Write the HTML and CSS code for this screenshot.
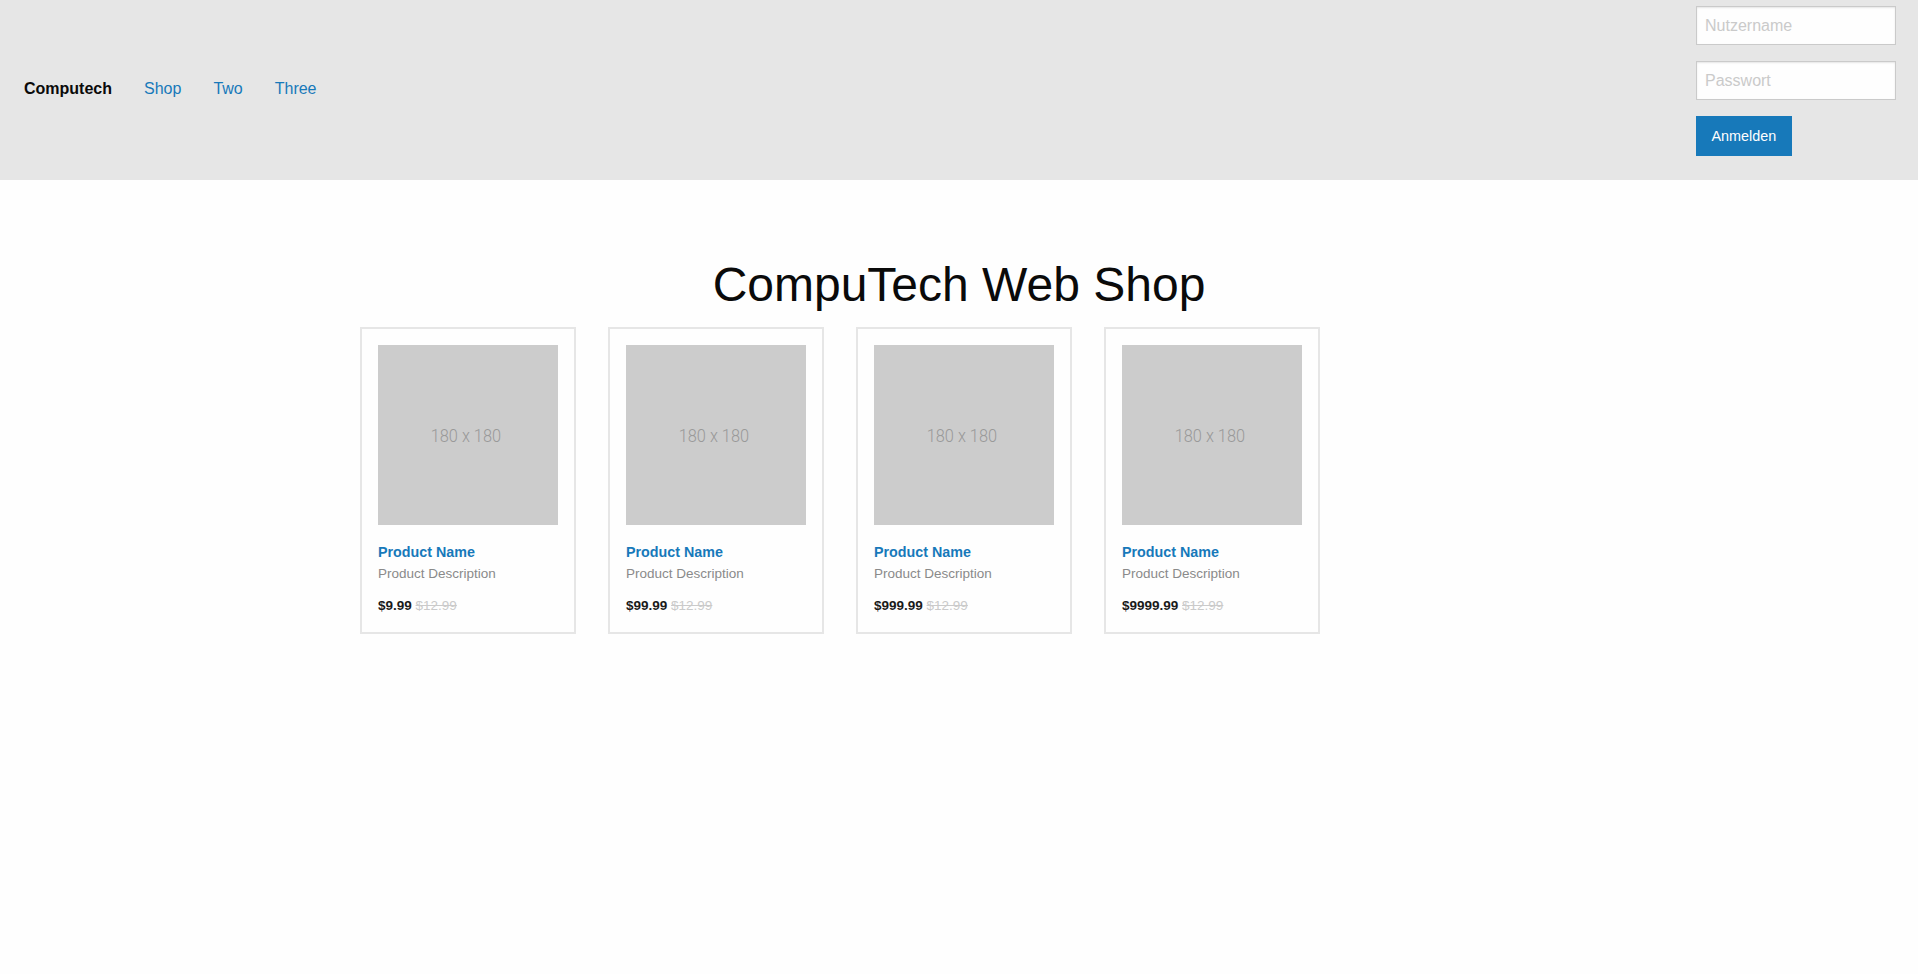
FILE: index.html
```html
<!DOCTYPE html>
<html lang="de">
<head>
<meta charset="utf-8">
<title>CompuTech Web Shop</title>
<link rel="stylesheet" href="styles.css">
</head>
<body>
<header class="top-bar">
  <ul class="menu">
    <li class="menu-text">Computech</li>
    <li><a href="#">Shop</a></li>
    <li><a href="#">Two</a></li>
    <li><a href="#">Three</a></li>
  </ul>
  <form class="login">
    <input type="text" placeholder="Nutzername">
    <input type="password" placeholder="Passwort">
    <button type="button" class="button">Anmelden</button>
  </form>
</header>
<main class="main">
  <h1 class="title">CompuTech Web Shop</h1>
  <div class="row">
    <div class="card">
      <div class="placeholder"><span>180 x 180</span></div>
      <div class="name">Product Name</div>
      <div class="desc">Product Description</div>
      <div class="price"><b>$9.99</b> <s>$12.99</s></div>
    </div>
    <div class="card">
      <div class="placeholder"><span>180 x 180</span></div>
      <div class="name">Product Name</div>
      <div class="desc">Product Description</div>
      <div class="price"><b>$99.99</b> <s>$12.99</s></div>
    </div>
    <div class="card">
      <div class="placeholder"><span>180 x 180</span></div>
      <div class="name">Product Name</div>
      <div class="desc">Product Description</div>
      <div class="price"><b>$999.99</b> <s>$12.99</s></div>
    </div>
    <div class="card">
      <div class="placeholder"><span>180 x 180</span></div>
      <div class="name">Product Name</div>
      <div class="desc">Product Description</div>
      <div class="price"><b>$9999.99</b> <s>$12.99</s></div>
    </div>
  </div>
</main>
</body>
</html>
```
FILE: styles.css
```css
* { box-sizing: border-box; }
html, body {
  margin: 0;
  padding: 0;
  background: #fefefe;
  color: #0a0a0a;
  font-family: "Liberation Sans", Arial, sans-serif;
}
.top-bar {
  height: 180px;
  background: #e6e6e6;
  display: flex;
  justify-content: space-between;
  align-items: flex-start;
  padding: 0 22px 0 8px;
}
.menu {
  list-style: none;
  margin: 0;
  padding: 0;
  display: flex;
  align-self: center;
  font-size: 16px;
  line-height: 16px;
  margin-top: -2px;
}
.menu li { padding: 11px 16px; }
.menu-text { font-weight: bold; }
.menu a { color: #1779ba; text-decoration: none; }
.login {
  width: 200px;
  display: flex;
  flex-direction: column;
  align-items: flex-start;
  padding-top: 6px;
}
.login input {
  width: 200px;
  height: 39px;
  margin: 0 0 16px;
  padding: 8px;
  border: 1px solid #cacaca;
  background: #fefefe;
  box-shadow: inset 0 1px 2px rgba(10,10,10,.1);
  font-family: "Liberation Sans", Arial, sans-serif;
  font-size: 16px;
  color: #0a0a0a;
  outline: none;
}
.login input::placeholder { color: #cacaca; }
.button {
  height: 40px;
  padding: 0 14.4px;
  border: 1px solid transparent;
  background: #1779ba;
  color: #fefefe;
  font-family: "Liberation Sans", Arial, sans-serif;
  font-size: 14.4px;
  line-height: 1;
  cursor: pointer;
}
.main { padding-top: 71px; }
.title {
  margin: 0 0 9px;
  font-size: 48px;
  line-height: 67px;
  font-weight: normal;
  text-align: center;
}
.row {
  width: 1200px;
  margin: 0 auto;
  padding-left: 1px;
  display: flex;
  gap: 32px;
}
.card {
  width: 216px;
  border: 2px solid #e6e6e6;
  padding: 16px;
}
.placeholder {
  width: 180px;
  height: 180px;
  background: #cccccc;
  display: flex;
  align-items: center;
  justify-content: center;
}
.placeholder span {
  font-family: Roboto, "Liberation Sans", sans-serif;
  font-weight: 300;
  font-size: 19px;
  color: #999999;
  transform: scaleX(0.86);
  margin-right: 5px;
}
.name {
  margin-top: 17px;
  font-size: 14.3px;
  line-height: 20px;
  font-weight: bold;
  color: #1779ba;
}
.desc {
  margin-top: 2px;
  font-size: 13.5px;
  line-height: 20px;
  color: #8a8a8a;
}
.price {
  margin-top: 12px;
  font-size: 13.5px;
  line-height: 20px;
}
.price b { color: #1a1a1a; }
.price s { color: #cacaca; }
```
